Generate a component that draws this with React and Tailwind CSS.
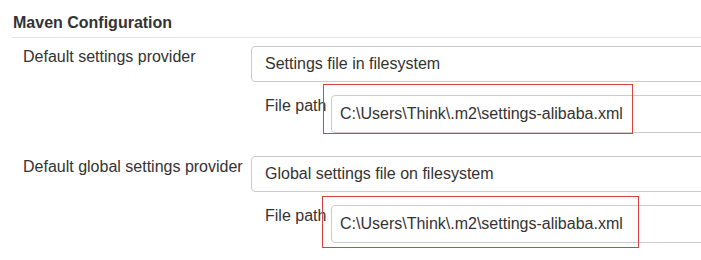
import React from 'react';

const SettingsGroup = ({label, provider, path, mark, className}) => {
    return(
        <div className={`flex ${className}`}>
            <div className="w-[251px] shrink-0 pl-[23px] pt-[1px]">{label}</div>
            <div className="flex-1 min-w-0">
                <div className="w-[520px] h-[36px] border border-[#cccccc] rounded-[4px] pl-[13px] flex items-center">
                    {provider}
                </div>
                <div className="flex mt-[13px]">
                    <div className="w-[80px] shrink-0 pl-[14px] pt-[1px]">File path</div>
                    <div className="relative">
                        <div className="w-[440px] h-[38px] border border-[#cccccc] rounded-[4px] pl-[8px] flex items-center">
                            {path}
                        </div>
                        <div className={`absolute border border-[#d9413f] pointer-events-none ${mark}`}></div>
                    </div>
                </div>
            </div>
        </div>
    )
}

const App = () => {
    const path = "C:\\Users\\Think\\.m2\\settings-alibaba.xml";

    return(
        <div className="w-[701px] h-[260px] bg-white overflow-hidden font-['Liberation_Sans',Arial,sans-serif] text-[16px] leading-[20px] text-[#333333]">
            <div className="ml-[12px] pl-[1px] pt-[13px] pb-[4px] border-b border-[#e5e5e5] font-bold">Maven Configuration</div>

            <SettingsGroup
                className="mt-[8px]"
                label="Default settings provider"
                provider="Settings file in filesystem"
                path={path}
                mark="-left-[8px] -top-[11px] w-[310px] h-[50px]"
            />

            <SettingsGroup
                className="mt-[23px]"
                label="Default global settings provider"
                provider="Global settings file on filesystem"
                path={path}
                mark="-left-[9px] -top-[9px] w-[317px] h-[52px]"
            />
        </div>
    )
}

export default App;
